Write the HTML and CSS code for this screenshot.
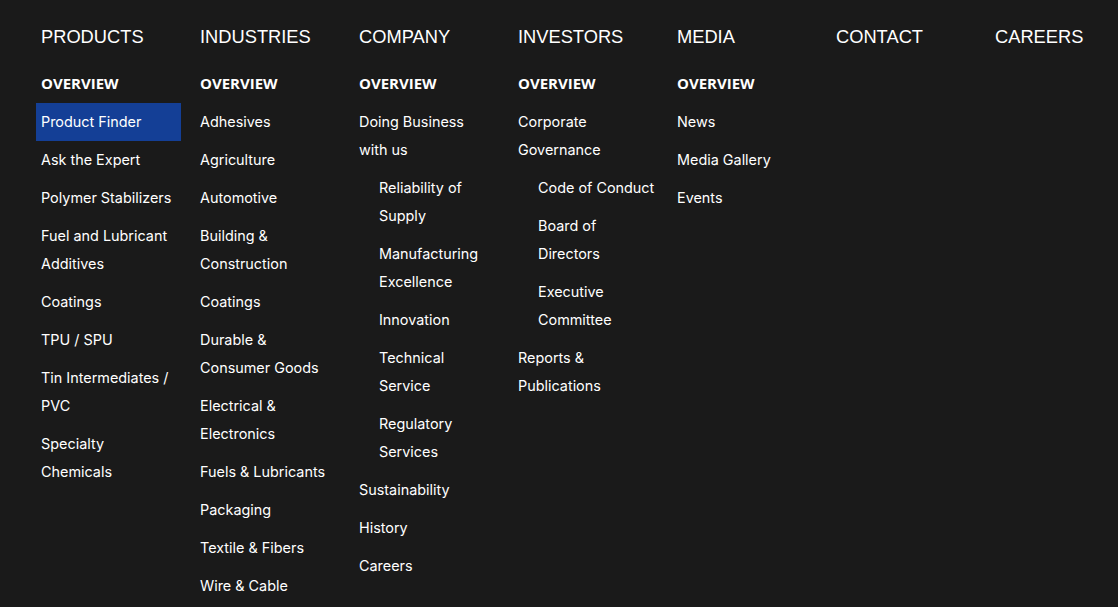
FILE: index.html
```html
<!DOCTYPE html>
<html>
<head>
<meta charset="utf-8">
<link rel="stylesheet" href="styles.css">
</head>
<body>
<nav class="menu">
  <div class="col">
    <div class="title">PRODUCTS</div>
    <ul class="list">
      <li class="item overview">OVERVIEW</li>
      <li class="item active">Product Finder</li>
      <li class="item">Ask the Expert</li>
      <li class="item">Polymer Stabilizers</li>
      <li class="item">Fuel and Lubricant Additives</li>
      <li class="item">Coatings</li>
      <li class="item">TPU / SPU</li>
      <li class="item">Tin Intermediates / PVC</li>
      <li class="item">Specialty Chemicals</li>
    </ul>
  </div>
  <div class="col">
    <div class="title">INDUSTRIES</div>
    <ul class="list">
      <li class="item overview">OVERVIEW</li>
      <li class="item">Adhesives</li>
      <li class="item">Agriculture</li>
      <li class="item">Automotive</li>
      <li class="item">Building &amp; Construction</li>
      <li class="item">Coatings</li>
      <li class="item">Durable &amp; Consumer Goods</li>
      <li class="item">Electrical &amp; Electronics</li>
      <li class="item">Fuels &amp; Lubricants</li>
      <li class="item">Packaging</li>
      <li class="item">Textile &amp; Fibers</li>
      <li class="item">Wire &amp; Cable</li>
    </ul>
  </div>
  <div class="col">
    <div class="title">COMPANY</div>
    <ul class="list">
      <li class="item overview">OVERVIEW</li>
      <li class="item">Doing Business with us</li>
      <li class="item sub">Reliability of Supply</li>
      <li class="item sub">Manufacturing Excellence</li>
      <li class="item sub">Innovation</li>
      <li class="item sub">Technical Service</li>
      <li class="item sub">Regulatory Services</li>
      <li class="item">Sustainability</li>
      <li class="item">History</li>
      <li class="item">Careers</li>
    </ul>
  </div>
  <div class="col">
    <div class="title">INVESTORS</div>
    <ul class="list">
      <li class="item overview">OVERVIEW</li>
      <li class="item">Corporate Governance</li>
      <li class="item sub">Code of Conduct</li>
      <li class="item sub">Board of Directors</li>
      <li class="item sub">Executive Committee</li>
      <li class="item">Reports &amp; Publications</li>
    </ul>
  </div>
  <div class="col">
    <div class="title">MEDIA</div>
    <ul class="list">
      <li class="item overview">OVERVIEW</li>
      <li class="item">News</li>
      <li class="item">Media Gallery</li>
      <li class="item">Events</li>
    </ul>
  </div>
  <div class="col">
    <div class="title">CONTACT</div>
  </div>
  <div class="col">
    <div class="title">CAREERS</div>
  </div>
</nav>
</body>
</html>
```

FILE: styles.css
```css
html, body {
  margin: 0;
  padding: 0;
  background: #1a1a1a;
  height: 100%;
}
body {
  color: #ffffff;
  font-family: Inter, "Liberation Sans", sans-serif;
  overflow: hidden;
}
.menu {
  display: grid;
  grid-template-columns: repeat(7, 145px);
  column-gap: 14px;
  padding: 25px 0 0 36px;
  align-items: start;
}
.title {
  font-family: "Liberation Sans", Arial, sans-serif;
  font-size: 18.3px;
  line-height: 24px;
  padding: 0 5px;
  margin-bottom: 16px;
  white-space: nowrap;
}
.list {
  list-style: none;
  margin: 0;
  padding: 0;
}
.item {
  font-size: 14.4px;
  line-height: 28px;
  padding: 5px 3px 5px 5px;
}
.item.sub {
  padding-left: 25px;
}
.item.overview {
  font-weight: 700;
  font-family: "Open Sans", Inter, sans-serif;
  font-size: 15px;
  padding-top: 4px;
  padding-bottom: 6px;
}
.item.active {
  background: #143f96;
}
```
